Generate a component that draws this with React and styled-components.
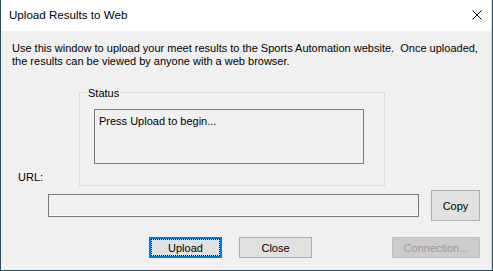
import React from "react";
import styled, { createGlobalStyle } from "styled-components";

const uiFont = `"Liberation Sans", Arial, sans-serif`;

const GlobalStyle = createGlobalStyle`
  html, body {
    margin: 0;
    padding: 0;
    background: #2f4b5a;
  }
  body {
    font-family: ${uiFont};
    font-size: 11px;
    color: #000;
  }
`;

const Window = styled.div`
  width: 492px;
  height: 270px;
  box-sizing: border-box;
  border-left: 1px solid #2a4b5c;
  border-right: 1px solid #d9d9d9;
  background: #f0f0f0;
  display: flex;
  flex-direction: column;
`;

const TitleBar = styled.div`
  height: 31px;
  flex: none;
  background: #fff;
  display: flex;
  align-items: center;
  padding: 0 9px 0 8px;
`;

const Title = styled.div`
  flex: 1;
  font-size: 11.6px;
  line-height: 16px;
  padding-bottom: 1px;
`;

const CloseX = styled.svg`
  width: 10px;
  height: 10px;
  margin-bottom: 2px;
`;

const Body = styled.div`
  flex: 1;
  display: flex;
  flex-direction: column;
`;

const Intro = styled.p`
  margin: 11px 0 0 11px;
  line-height: 13px;
  white-space: nowrap;
`;

const MiddleRow = styled.div`
  display: flex;
  align-items: flex-end;
  margin-top: 24px;
`;

const FieldLabel = styled.div`
  width: 78px;
  padding-left: 17px;
  box-sizing: border-box;
  line-height: 13px;
  margin-bottom: 2px;
`;

const GroupBox = styled.div`
  position: relative;
  width: 306px;
  height: 94px;
  box-sizing: border-box;
  border: 1px solid #dcdcdc;
  padding: 16px 0 0 14px;
`;

const GroupCaption = styled.span`
  position: absolute;
  left: 7px;
  top: -8px;
  padding: 0 1px;
  background: #f0f0f0;
  line-height: 16px;
`;

const StatusBox = styled.div`
  width: 270px;
  height: 55px;
  box-sizing: border-box;
  border: 1px solid #7a7a7a;
  padding: 4px 4px;
  line-height: 14px;
`;

const UrlRow = styled.div`
  display: flex;
  align-items: center;
  margin: 4px 0 0 47px;
  gap: 12px;
`;

const UrlInput = styled.div`
  width: 371px;
  height: 23px;
  box-sizing: border-box;
  border: 1px solid #7a7a7a;
  box-shadow: inset 0 -1px 0 #fff;
`;

const Button = styled.button`
  font-family: ${uiFont};
  font-size: 11px;
  width: ${(p) => p.$w}px;
  height: ${(p) => p.$h || 21}px;
  margin-left: ${(p) => p.$ml || 0}px;
  box-sizing: border-box;
  padding: 0;
  background: ${(p) => (p.disabled ? "#cccccc" : "#e1e1e1")};
  color: ${(p) => (p.disabled ? "#9b9b9b" : "#000")};
  border: 1px solid ${(p) => (p.disabled ? "#bfbfbf" : "#adadad")};
  border-radius: 0;
  line-height: 14px;
  cursor: default;

  &.default {
    border: 2px solid #0078d7;
    outline: 1px dotted #000;
    outline-offset: -3px;
  }
`;

const ButtonRow = styled.div`
  display: flex;
  margin-top: 16px;
`;

export default function App() {
  return (
    <>
      <GlobalStyle />
      <Window>
        <TitleBar>
          <Title>Upload Results to Web</Title>
          <CloseX viewBox="0 0 10 10">
            <path d="M0.5 0.5L9.5 9.5M9.5 0.5L0.5 9.5" stroke="#000" strokeWidth="1" fill="none" />
          </CloseX>
        </TitleBar>
        <Body>
          <Intro>
            Use this window to upload your meet results to the Sports Automation website.&nbsp; Once uploaded,
            <br />
            the results can be viewed by anyone with a web browser.
          </Intro>
          <MiddleRow>
            <FieldLabel>URL:</FieldLabel>
            <GroupBox>
              <GroupCaption>Status</GroupCaption>
              <StatusBox>Press Upload to begin...</StatusBox>
            </GroupBox>
          </MiddleRow>
          <UrlRow>
            <UrlInput />
            <Button $w={49} $h={31}>Copy</Button>
          </UrlRow>
          <ButtonRow>
            <Button className="default" $w={73} $ml={148}>Upload</Button>
            <Button $w={73} $ml={17}>Close</Button>
            <Button $w={88} $ml={80} disabled>Connection...</Button>
          </ButtonRow>
        </Body>
      </Window>
    </>
  );
}
